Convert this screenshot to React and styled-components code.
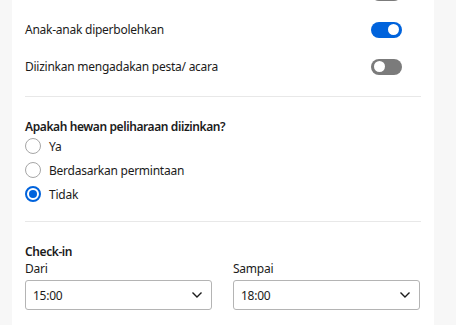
import React from "react";
import styled, { createGlobalStyle } from "styled-components";

const Global_Style = createGlobalStyle`
  html, body {
    margin: 0;
    padding: 0;
    background: #f7f7f7;
    overflow: hidden;
  }
  body {
    font-family: "Noto Sans", "Open Sans", sans-serif;
    color: #1b1b1b;
    letter-spacing: -0.25px;
  }
`;

const Styled_Page = styled.div`
  width: 456px;
  height: 325px;
  overflow: hidden;
`;

const Styled_Card = styled.div`
  margin: -26px 0 0 12px;
  width: 422px;
  box-sizing: border-box;
  padding: 0 13px 20px 13px;
  background: #ffffff;
`;

const Styled_Toggle_Row = styled.div`
  height: 37px;
  display: flex;
  align-items: center;
  justify-content: space-between;
  padding-right: 19px;
  font-size: 12px;
`;

const Styled_Switch = styled.span`
  position: relative;
  width: 31px;
  height: 16px;
  border-radius: 8px;
  background: ${({ on }) => (on ? "#0063dc" : "#7b7b7b")};
  &::after {
    content: "";
    position: absolute;
    top: 2.5px;
    left: ${({ on }) => (on ? "17px" : "3px")};
    width: 11px;
    height: 11px;
    border-radius: 50%;
    background: #ffffff;
  }
`;

const Styled_Divider = styled.hr`
  border: none;
  border-top: 1px solid #e8e8e8;
  margin: ${({ top }) => top}px 0 0 0;
`;

const Styled_Section = styled.div`
  padding-top: ${({ top }) => top}px;
`;

const Styled_Heading = styled.div`
  font-size: 12px;
  line-height: 17px;
  font-weight: 600;
  letter-spacing: -0.4px;
`;

const Styled_Radio_List = styled.div`
  display: flex;
  flex-direction: column;
  gap: 2px;
`;

const Styled_Radio_Row = styled.label`
  height: 22px;
  display: flex;
  align-items: center;
  gap: 8px;
  font-size: 12px;
`;

const Styled_Radio = styled.span`
  width: 16px;
  height: 16px;
  box-sizing: border-box;
  border-radius: 50%;
  border: ${({ checked }) => (checked ? "2px solid #0063dc" : "1px solid #a6a6a6")};
  display: flex;
  align-items: center;
  justify-content: center;
  &::after {
    content: "";
    display: ${({ checked }) => (checked ? "block" : "none")};
    width: 8px;
    height: 8px;
    border-radius: 50%;
    background: #0063dc;
  }
`;

const Styled_Time_Grid = styled.div`
  display: grid;
  grid-template-columns: 187px 187px;
  column-gap: 21px;
`;

const Styled_Label = styled.div`
  font-size: 12px;
  line-height: 17px;
`;

const Styled_Select = styled.div`
  margin-top: 3px;
  height: 30px;
  box-sizing: border-box;
  border: 1px solid #b4b4b4;
  border-radius: 3px;
  display: flex;
  align-items: center;
  justify-content: space-between;
  padding: 0 8px 0 7px;
  font-size: 12px;
`;

const Chevron = () => (
    <svg width="12" height="8" viewBox="0 0 12 8">
        <path d="M1.5 1.5 L6 6 L10.5 1.5" fill="none" stroke="#1b1b1b" strokeWidth="1.4" />
    </svg>
);

const Time_Select = ({ label, value }) => (
    <div>
        <Styled_Label>{label}</Styled_Label>
        <Styled_Select>
            <span>{value}</span>
            <Chevron />
        </Styled_Select>
    </div>
);

const toggles = [
    { text: "Merokok diperbolehkan di dalam ruangan", on: false },
    { text: "Anak-anak diperbolehkan", on: true },
    { text: "Diizinkan mengadakan pesta/ acara", on: false },
];

const pets = [
    { text: "Ya", checked: false },
    { text: "Berdasarkan permintaan", checked: false },
    { text: "Tidak", checked: true },
];

const App = () => (
    <Styled_Page>
        <Global_Style />
        <Styled_Card>
            {toggles.map((item) => (
                <Styled_Toggle_Row key={item.text}>
                    <span>{item.text}</span>
                    <Styled_Switch on={item.on ? 1 : 0} />
                </Styled_Toggle_Row>
            ))}
            <Styled_Divider top={11} />
            <Styled_Section top={21}>
                <Styled_Heading>Apakah hewan peliharaan diizinkan?</Styled_Heading>
                <Styled_Radio_List>
                    {pets.map((item) => (
                        <Styled_Radio_Row key={item.text}>
                            <Styled_Radio checked={item.checked} />
                            {item.text}
                        </Styled_Radio_Row>
                    ))}
                </Styled_Radio_List>
            </Styled_Section>
            <Styled_Divider top={16} />
            <Styled_Section top={21}>
                <Styled_Heading>Check-in</Styled_Heading>
                <Styled_Time_Grid>
                    <Time_Select label="Dari" value="15:00" />
                    <Time_Select label="Sampai" value="18:00" />
                </Styled_Time_Grid>
            </Styled_Section>
        </Styled_Card>
    </Styled_Page>
);

export default App;
